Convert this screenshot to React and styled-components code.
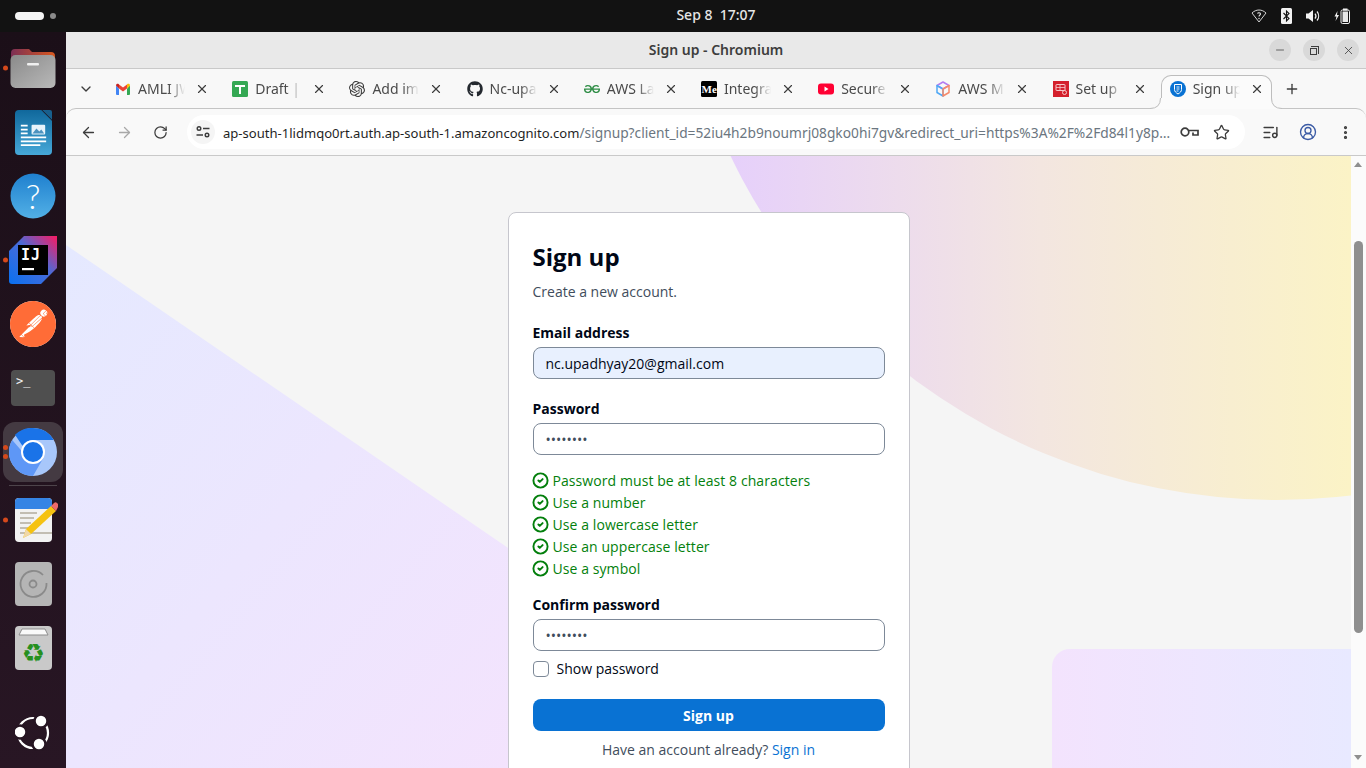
import styled, { createGlobalStyle } from "styled-components";
import {
  ArrowLeft,
  ArrowRight,
  ChevronDown,
  CircleCheck,
  CircleUserRound,
  EllipsisVertical,
  ListMusic,
  Minus,
  Plus,
  RotateCw,
  Star,
  X,
} from "lucide-react";
import { FaGithub } from "react-icons/fa";
import { SiGeeksforgeeks, SiOpenai, SiPostman } from "react-icons/si";

const GlobalStyle = createGlobalStyle`
  html, body {
    margin: 0;
    height: 100%;
    overflow: hidden;
  }
  * {
    box-sizing: border-box;
  }
`;

const chromeFont = `"Noto Sans", "Open Sans", sans-serif`;
const pageFont = `"Open Sans", "Noto Sans", sans-serif`;

/* ---------- favicons ---------- */

function GmailIcon() {
  return (
    <svg width="16" height="16" viewBox="0 0 16 16">
      <path d="M1 4.5V13a1 1 0 0 0 1 1h2V7.5z" fill="#4285f4" />
      <path d="M15 4.5V13a1 1 0 0 1-1 1h-2V7.5z" fill="#34a853" />
      <path d="M1 4.5C1 3 2.5 2.3 3.6 3.1L4 3.4v4.1z" fill="#c5221f" />
      <path d="M15 4.500c0-1.500-1.500-2.200-2.600-1.400L12 3.400v4.100z" fill="#fbbc04" />
      <path d="M4 3.400 8 6.400l4-3v4.100l-4 3-4-3z" fill="#ea4335" />
    </svg>
  );
}

function DocsGreenIcon() {
  return (
    <svg width="16" height="16" viewBox="0 0 16 16">
      <rect width="16" height="16" rx="1.500" fill="#34a853" />
      <rect x="3" y="4" width="10" height="2" fill="#fff" />
      <rect x="7" y="4" width="2" height="9" fill="#fff" />
    </svg>
  );
}

function MediumIcon() {
  return (
    <svg width="16" height="16" viewBox="0 0 16 16">
      <rect width="16" height="16" rx="1.500" fill="#000" />
      <text x="0.500" y="12" fontSize="11" fontWeight="700" fontFamily="Liberation Serif, serif" fill="#fff">
        Me
      </text>
    </svg>
  );
}

function YoutubeIcon() {
  return (
    <svg width="16" height="16" viewBox="0 0 16 16">
      <rect y="2.500" width="16" height="11" rx="3" fill="#ff0033" />
      <path d="M6.500 5.500v5L10.500 8z" fill="#fff" />
    </svg>
  );
}

function CubeIcon() {
  return (
    <svg width="16" height="16" viewBox="0 0 16 16" fill="none" strokeWidth="1.500" strokeLinejoin="round">
      <path d="M8 1 14 4.500 8 8 2 4.500z" stroke="#b47cf0" />
      <path d="M2 4.500v7L8 15V8z" stroke="#4fa8f5" />
      <path d="M14 4.500v7L8 15V8z" stroke="#f58a6b" />
    </svg>
  );
}

function RedDocIcon() {
  return (
    <svg width="16" height="16" viewBox="0 0 16 16" fill="none">
      <rect width="16" height="16" fill="#d4202c" />
      <rect x="3" y="3.500" width="9" height="6" rx="0.500" stroke="#f7c6c9" />
      <path d="M3 6.500h9M7 3.500v6" stroke="#f7c6c9" strokeWidth="0.800" />
      <circle cx="11.500" cy="11.500" r="2" stroke="#f7c6c9" />
    </svg>
  );
}

function CognitoIcon() {
  return (
    <svg width="16" height="16" viewBox="0 0 16 16" fill="none">
      <circle cx="8" cy="8" r="8" fill="#0972d3" />
      <path d="M4.500 3.500h7v5c0 2-1.500 3.300-3.500 4.500-2-1.200-3.500-2.500-3.500-4.500z" stroke="#fff" />
      <path d="M6.500 6h3M6.500 8h3M6.500 10h2" stroke="#fff" strokeWidth="0.900" />
    </svg>
  );
}

/* ---------- dock icons ---------- */

function FilesDock() {
  return (
    <svg width="46" height="42" viewBox="0 0 46 42">
      <defs>
        <linearGradient id="folderTop" x1="0" x2="1">
          <stop offset="0" stopColor="#7c2f55" />
          <stop offset="1" stopColor="#d9581f" />
        </linearGradient>
        <linearGradient id="folderBody" x1="0" y1="0" x2="1" y2="1">
          <stop offset="0" stopColor="#8a8a8a" />
          <stop offset="1" stopColor="#b9b9b9" />
        </linearGradient>
      </defs>
      <path d="M1 6a4 4 0 0 1 4-4h14l3 3h19a4 4 0 0 1 4 4v12H1z" fill="url(#folderTop)" />
      <rect x="0.500" y="8" width="45" height="33" rx="5" fill="url(#folderBody)" />
      <rect x="17" y="16" width="12" height="2.500" rx="1" fill="#f0f0f0" />
    </svg>
  );
}

function WriterDock() {
  return (
    <svg width="37" height="45" viewBox="0 0 38 46">
      <defs>
        <linearGradient id="writerBody" x1="0" y1="0" x2="0" y2="1">
          <stop offset="0" stopColor="#10689c" />
          <stop offset="1" stopColor="#46a8d8" />
        </linearGradient>
      </defs>
      <path d="M4 0h23l11 11v31a4 4 0 0 1-4 4H4a4 4 0 0 1-4-4V4a4 4 0 0 1 4-4z" fill="url(#writerBody)" />
      <path d="M28 0h8a2 2 0 0 1 2 2v8z" fill="#185f8d" />
      <path d="M6 16h7M6 20h7M6 24h7M6 28h26M6 32h26M6 36h20" stroke="#fff" strokeWidth="1.800" />
      <rect x="17" y="15" width="14" height="10" rx="1" fill="#e8f3fa" />
      <path d="M18 24l4-5 3 3 2-2 3 4z" fill="#4d93bf" />
    </svg>
  );
}

function HelpDock() {
  return (
    <svg width="46" height="46" viewBox="0 0 46 46">
      <defs>
        <linearGradient id="helpBody" x1="0" y1="0" x2="0" y2="1">
          <stop offset="0" stopColor="#1f80cf" />
          <stop offset="1" stopColor="#52b0e6" />
        </linearGradient>
      </defs>
      <circle cx="23" cy="23" r="22.500" fill="url(#helpBody)" />
      <text x="23" y="36" textAnchor="middle" fontSize="34" fontWeight="300" fill="#fff" fontFamily="Lato, Open Sans, sans-serif">
        ?
      </text>
    </svg>
  );
}

function IdeaDock() {
  return (
    <svg width="48" height="48" viewBox="0 0 48 48">
      <defs>
        <linearGradient id="ideaBody" x1="0" y1="1" x2="1" y2="0">
          <stop offset="0" stopColor="#0870f0" />
          <stop offset="0.550" stopColor="#4a6bd8" />
          <stop offset="1" stopColor="#fb1a62" />
        </linearGradient>
      </defs>
      <path d="M15 0h33v32L32 48H3a3 3 0 0 1-3-3V15z" fill="url(#ideaBody)" />
      <rect x="9" y="9" width="30" height="30" fill="#000" />
      <text x="12" y="24" fontSize="15" fontWeight="700" fill="#fff" fontFamily="DejaVu Sans Mono, monospace" textLength="19">
        IJ
      </text>
      <rect x="13" y="32" width="12" height="2.200" fill="#fff" />
    </svg>
  );
}

function PostmanDock() {
  return (
    <PostmanBadge>
      <SiPostman size={46} color="#ff6c37" />
    </PostmanBadge>
  );
}

function TerminalDock() {
  return (
    <svg width="44" height="36" viewBox="0 0 44 36">
      <rect width="44" height="36" rx="4" fill="#4f4f4f" />
      <text x="5" y="15" fontSize="12" fill="#f2f2f2" fontFamily="DejaVu Sans Mono, monospace">
        &gt;_
      </text>
    </svg>
  );
}

function ChromiumDock() {
  return (
    <svg width="48" height="48" viewBox="0 0 48 48">
      <circle cx="24" cy="24" r="24" fill="#a8c7fa" />
      <path d="M24 0a24 24 0 0 1 20.800 12H24a12 12 0 0 0-10.400 6L6 6.800A24 24 0 0 1 24 0z" fill="#1a73e8" />
      <path d="M3.200 12A24 24 0 0 0 24 48l10.400-18H24a12 12 0 0 1-10.400-6z" fill="#5e97f6" />
      <circle cx="24" cy="24" r="12" fill="#fff" />
      <circle cx="24" cy="24" r="10" fill="#1a73e8" />
    </svg>
  );
}

function NotesDock() {
  return (
    <svg width="50" height="46" viewBox="-7 0 50 46">
      <rect x="0" y="1" width="37" height="44" rx="4" fill="#f2f2f2" />
      <path d="M0 12V5a4 4 0 0 1 4-4h29a4 4 0 0 1 4 4v7z" fill="#3584e4" />
      <path d="M5 16h17M5 21h14M5 26h11M5 31h8M5 36h32" stroke="#c2bdb2" strokeWidth="2" />
      <path d="M36 9 41 14 16 37 8 41 11 32z" fill="#f5c211" />
      <path d="M36 9 39 6c1-1 2-1 3 0l1 1c1 1 1 2 0 3l-2 4z" fill="#ed6a6a" />
      <path d="M11 32 8 41l8-4z" fill="#f0d8a8" />
    </svg>
  );
}

function DiskDock() {
  return (
    <svg width="37" height="44" viewBox="0 0 37 44" fill="none">
      <rect width="37" height="44" rx="4" fill="#b5b5b5" />
      <path d="M28 13a13 13 0 1 0 3.500 8" stroke="#8a8a8a" strokeWidth="1.800" />
      <circle cx="18" cy="22" r="3.500" stroke="#8a8a8a" strokeWidth="1.800" />
    </svg>
  );
}

function TrashDock() {
  return (
    <svg width="37" height="44" viewBox="0 0 37 44" fill="none">
      <rect width="37" height="44" rx="4" fill="#c9c9c9" />
      <path d="M4 9 7 3h23l3 6z" fill="#fafafa" stroke="#8d8d8d" />
      <text x="18.500" y="36" textAnchor="middle" fontSize="26" fill="#26901f" fontFamily="DejaVu Sans, sans-serif">
        ♻
      </text>
    </svg>
  );
}

function UbuntuDock() {
  return (
    <svg width="36" height="36" viewBox="0 0 36 36" fill="none">
      <circle cx="18" cy="18" r="15" stroke="#fff" strokeWidth="2.200" />
      <circle cx="5" cy="17" r="6.500" fill="#fff" stroke="#261522" strokeWidth="2.500" />
      <circle cx="26" cy="6" r="6.500" fill="#fff" stroke="#261522" strokeWidth="2.500" />
      <circle cx="24" cy="29" r="6.500" fill="#fff" stroke="#261522" strokeWidth="2.500" />
    </svg>
  );
}

/* ---------- small toolbar and tray icons ---------- */

function SiteInfoIcon() {
  return (
    <svg width="16" height="16" viewBox="0 0 16 16" fill="none" stroke="#3c3c3c" strokeWidth="1.400">
      <circle cx="4" cy="4.500" r="1.800" />
      <path d="M8 4.500h6.500M1.500 11H8" />
      <circle cx="12" cy="11" r="1.800" />
    </svg>
  );
}

function KeyIcon() {
  return (
    <svg width="19" height="12" viewBox="0 0 19 12" fill="none" stroke="#3c3c3c" strokeWidth="1.700">
      <circle cx="5" cy="6" r="3.800" />
      <path d="M9 4.500h9v4.500h-5V6.500" />
    </svg>
  );
}

function WifiQuestionIcon() {
  return (
    <svg width="16" height="14" viewBox="0 0 16 14" fill="none" stroke="#e8e8e8">
      <path d="M1 4 8 13l7-9C13 2 10.500 1 8 1S3 2 1 4z" strokeWidth="0.900" />
      <path d="M6.500 4.500C7 3.500 9.500 3.500 9.500 5c0 1-1.500 1-1.500 2.500" strokeWidth="1.100" />
      <circle cx="8" cy="9.500" r="0.700" fill="#e8e8e8" stroke="none" />
    </svg>
  );
}

function BluetoothIcon() {
  return (
    <svg width="11" height="16" viewBox="0 0 11 16" fill="none">
      <rect width="11" height="16" rx="1.500" fill="#f2f2f2" />
      <path d="M2.500 5 8 10.500 5.500 13V3L8 5.500 2.500 11" stroke="#121212" strokeWidth="1.100" />
    </svg>
  );
}

function VolumeIcon() {
  return (
    <svg width="14" height="14" viewBox="0 0 14 14" fill="none">
      <path d="M0 4.500h2.500L7 1v12L2.500 9.500H0z" fill="#f2f2f2" />
      <path d="M9 4.500a4 4 0 0 1 0 5M11 2.500a7 7 0 0 1 0 9" stroke="#f2f2f2" strokeWidth="1.200" />
    </svg>
  );
}

function BatteryIcon() {
  return (
    <svg width="16" height="16" viewBox="0 0 16 16" fill="none">
      <path d="M3.500 3 0.500 8.500h2L1.500 13 5 7H3z" fill="#f2f2f2" />
      <rect x="7" y="2" width="8.500" height="13.500" rx="1.500" stroke="#f2f2f2" />
      <rect x="9" y="0.500" width="4.500" height="2" fill="#f2f2f2" />
      <rect x="8.500" y="3.500" width="5.500" height="10.500" fill="#e8e8e8" />
    </svg>
  );
}

function TabFlare({ side }) {
  return (
    <FlareSvg $side={side} viewBox="0 0 12 11">
      <path d="M0 10.500Q10.500 10.500 10.500 0H12V11H0z" fill="#fbfbfb" />
      <path d="M0 10.500Q10.500 10.500 10.500 0" fill="none" stroke="#bdbdbd" />
    </FlareSvg>
  );
}

/* ---------- data ---------- */

const tabs = [
  { title: "AMLI JW", Icon: GmailIcon },
  { title: "Draft ||", Icon: DocsGreenIcon },
  { title: "Add im", Icon: () => <SiOpenai size={16} color="#3c3c3c" /> },
  { title: "Nc-upa", Icon: () => <FaGithub size={16} color="#24292f" /> },
  { title: "AWS La", Icon: () => <SiGeeksforgeeks size={16} color="#2f8d46" /> },
  { title: "Integra", Icon: MediumIcon },
  { title: "Secure", Icon: YoutubeIcon },
  { title: "AWS M", Icon: CubeIcon },
  { title: "Set up", Icon: RedDocIcon },
  { title: "Sign up", Icon: CognitoIcon, active: true },
];

const dockItems = [
  { Icon: FilesDock, dots: 1 },
  { Icon: WriterDock },
  { Icon: HelpDock },
  { Icon: IdeaDock, dots: 1 },
  { Icon: PostmanDock },
  { Icon: TerminalDock },
  { Icon: ChromiumDock, dots: 2, active: true },
];

const lowerDockItems = [
  { Icon: NotesDock, dots: 1 },
  { Icon: DiskDock },
  { Icon: TrashDock },
];

const rules = [
  "Password must be at least 8 characters",
  "Use a number",
  "Use a lowercase letter",
  "Use an uppercase letter",
  "Use a symbol",
];

function DockEntry({ item }) {
  return (
    <DockSlot>
      <DockTile $active={item.active}>
        <item.Icon />
      </DockTile>
      {item.dots ? (
        <DockDots>
          {Array.from({ length: item.dots }).map((_, i) => (
            <DockDot key={i} />
          ))}
        </DockDots>
      ) : null}
    </DockSlot>
  );
}

export default function App() {
  return (
    <Desktop>
      <GlobalStyle />
      <TopBar>
        <Activities>
          <ActivityPill />
          <ActivityDot />
        </Activities>
        <Clock>Sep 8&nbsp;&nbsp;17:07</Clock>
        <Tray>
          <WifiQuestionIcon />
          <BluetoothIcon />
          <VolumeIcon />
          <BatteryIcon />
        </Tray>
      </TopBar>

      <Workspace>
        <Dock>
          {dockItems.map((item, i) => (
            <DockEntry key={i} item={item} />
          ))}
          <DockDivider />
          {lowerDockItems.map((item, i) => (
            <DockEntry key={i} item={item} />
          ))}
          <DockFooter>
            <UbuntuDock />
          </DockFooter>
        </Dock>

        <Window>
          <TitleBar>
            <WindowTitle>Sign up - Chromium</WindowTitle>
            <WindowButtons>
              <WindowButton>
                <Minus size={12} strokeWidth={1.500} />
              </WindowButton>
              <WindowButton>
                <RestoreGlyph />
              </WindowButton>
              <WindowButton>
                <X size={13} strokeWidth={1.500} />
              </WindowButton>
            </WindowButtons>
          </TitleBar>

          <TabStrip>
            <TabListButton>
              <ChevronDown size={16} strokeWidth={2} />
            </TabListButton>
            <TabRow>
              {tabs.map((tab) => (
                <Tab key={tab.title} $active={tab.active}>
                  {tab.active && <TabFlare side="left" />}
                  <Favicon>
                    <tab.Icon />
                  </Favicon>
                  <TabTitle>{tab.title}</TabTitle>
                  <TabClose>
                    <X size={14} strokeWidth={2} />
                  </TabClose>
                  {tab.active && <TabFlare side="right" />}
                </Tab>
              ))}
            </TabRow>
            <NewTab>
              <Plus size={16} strokeWidth={2} />
            </NewTab>
          </TabStrip>

          <Toolbar>
            <NavButton>
              <ArrowLeft size={17} strokeWidth={1.800} />
            </NavButton>
            <NavButton $muted>
              <ArrowRight size={17} strokeWidth={1.800} />
            </NavButton>
            <NavButton>
              <RotateCw size={15} strokeWidth={2} />
            </NavButton>
            <Omnibox>
              <SiteBadge>
                <SiteInfoIcon />
              </SiteBadge>
              <Url>
                <UrlHost>ap-south-1lidmqo0rt.auth.ap-south-1.amazoncognito.com</UrlHost>
                /signup?client_id=52iu4h2b9noumrj08gko0hi7gv&redirect_uri=https%3A%2F%2Fd84l1y8p…
              </Url>
              <OmniActions>
                <KeyIcon />
                <Star size={17} strokeWidth={1.800} color="#3c3c3c" />
              </OmniActions>
            </Omnibox>
            <ToolbarActions>
              <ListMusic size={17} strokeWidth={2} color="#3c3c3c" />
              <CircleUserRound size={18} strokeWidth={1.800} color="#3b5ba5" />
              <EllipsisVertical size={17} strokeWidth={2.500} color="#3c3c3c" />
            </ToolbarActions>
          </Toolbar>

          <Viewport>
            <Page>
              <Backdrop viewBox="0 0 1285 612" preserveAspectRatio="none">
                <defs>
                  <linearGradient id="bgTop" gradientUnits="userSpaceOnUse" x1="664" y1="0" x2="1285" y2="0">
                    <stop offset="0" stopColor="#e6d0fb" />
                    <stop offset="0.500" stopColor="#f3e6e0" />
                    <stop offset="1" stopColor="#fbf3c6" />
                  </linearGradient>
                  <linearGradient id="bgLeft" x1="0" y1="0" x2="1" y2="1">
                    <stop offset="0" stopColor="#e5e9ff" />
                    <stop offset="1" stopColor="#f3e3fd" />
                  </linearGradient>
                  <linearGradient id="bgCorner" gradientUnits="userSpaceOnUse" x1="986" y1="0" x2="1285" y2="0">
                    <stop offset="0" stopColor="#f3e3fd" />
                    <stop offset="1" stopColor="#e8e9ff" />
                  </linearGradient>
                </defs>
                <circle cx="1211" cy="-262" r="606" fill="url(#bgTop)" />
                <path d="M0 89 445 394V612H0z" fill="url(#bgLeft)" />
                <rect x="986" y="493" width="340" height="160" rx="18" fill="url(#bgCorner)" />
              </Backdrop>
              <Card>
                <CardTitle>Sign up</CardTitle>
                <CardSubtitle>Create a new account.</CardSubtitle>

                <Field>
                  <FieldLabel>Email address</FieldLabel>
                  <TextInput $autofilled type="email" value="nc.upadhyay20@gmail.com" readOnly />
                </Field>

                <Field>
                  <FieldLabel>Password</FieldLabel>
                  <TextInput type="password" value="Passw0rd" readOnly />
                </Field>

                <RuleList>
                  {rules.map((rule) => (
                    <Rule key={rule}>
                      <RuleIcon size={17} strokeWidth={2.700} />
                      {rule}
                    </Rule>
                  ))}
                </RuleList>

                <Field>
                  <FieldLabel>Confirm password</FieldLabel>
                  <TextInput type="password" value="Passw0rd" readOnly />
                </Field>

                <ShowPassword>
                  <CheckBox />
                  Show password
                </ShowPassword>

                <SubmitButton>Sign up</SubmitButton>

                <CardFooter>
                  Have an account already? <FooterLink>Sign in</FooterLink>
                </CardFooter>
              </Card>
            </Page>
            <ScrollTrack>
              <ScrollArrow />
              <ScrollThumb />
              <ScrollArrow $down />
            </ScrollTrack>
          </Viewport>
        </Window>
      </Workspace>
    </Desktop>
  );
}

const Desktop = styled.div`
  display: flex;
  flex-direction: column;
  width: 1366px;
  height: 768px;
  overflow: hidden;
  background: #121212;
`;

const TopBar = styled.header`
  display: grid;
  grid-template-columns: 1fr auto 1fr;
  align-items: center;
  height: 32px;
  flex: none;
  background: #121212;
  padding: 0 16px 0 15px;
`;

const Activities = styled.div`
  display: flex;
  align-items: center;
  gap: 6px;
`;

const ActivityPill = styled.div`
  width: 29px;
  height: 8px;
  border-radius: 4px;
  background: #f4f4f4;
`;

const ActivityDot = styled.div`
  width: 6px;
  height: 6px;
  border-radius: 50%;
  background: #8a8a8a;
`;

const Clock = styled.div`
  font: 500 14px ${chromeFont};
  color: #e6e6e6;
  margin: -3px 0 0 67px;
`;

const Tray = styled.div`
  display: flex;
  align-items: center;
  justify-content: flex-end;
  gap: 14px;
`;

const Workspace = styled.div`
  display: flex;
  flex: 1;
  min-height: 0;
`;

const Dock = styled.nav`
  display: flex;
  flex-direction: column;
  width: 66px;
  flex: none;
  padding-top: 4px;
  background: linear-gradient(180deg, #1b0f18 0%, #281624 100%);
`;

const DockSlot = styled.div`
  position: relative;
  display: flex;
  align-items: center;
  justify-content: center;
  height: 64px;
  flex: none;
`;

const DockTile = styled.div`
  display: flex;
  align-items: center;
  justify-content: center;
  width: 60px;
  height: 60px;
  border-radius: 12px;
  background: ${(p) => (p.$active ? "#443a42" : "transparent")};
`;

const PostmanBadge = styled.span`
  display: flex;
  width: 46px;
  height: 46px;
  border-radius: 50%;
  background: #ffffff;
`;

const DockDots = styled.div`
  position: absolute;
  left: 3px;
  top: 50%;
  transform: translateY(-50%);
  display: flex;
  flex-direction: column;
  gap: 4px;
`;

const DockDot = styled.span`
  display: block;
  width: 5px;
  height: 5px;
  border-radius: 50%;
  background: #d5491c;
`;

const DockDivider = styled.div`
  height: 1px;
  margin: 1px 9px 2px;
  background: #4d444b;
  flex: none;
`;

const DockFooter = styled.div`
  display: flex;
  justify-content: center;
  margin-top: auto;
  padding-bottom: 17px;
`;

const Window = styled.main`
  display: flex;
  flex-direction: column;
  flex: 1;
  min-width: 0;
  background: #f8f8f8;
`;

const TitleBar = styled.div`
  position: relative;
  display: flex;
  align-items: center;
  justify-content: center;
  height: 37px;
  flex: none;
  background: #e9e9e9;
  border-bottom: 1px solid #c9c9c9;
`;

const WindowTitle = styled.div`
  font: 600 14px ${chromeFont};
  color: #3d3d3d;
  margin-top: -2px;
`;

const WindowButtons = styled.div`
  position: absolute;
  right: 7px;
  top: 7px;
  display: flex;
  gap: 12px;
`;

const WindowButton = styled.div`
  display: flex;
  align-items: center;
  justify-content: center;
  width: 22px;
  height: 22px;
  border-radius: 50%;
  background: #d9d9d9;
  color: #3d3d3d;
`;

const RestoreGlyph = styled.span`
  position: relative;
  display: block;
  width: 7px;
  height: 7px;
  margin: 2px 2px 0 0;
  border: 1px solid #3d3d3d;

  &::after {
    content: "";
    position: absolute;
    top: -3px;
    right: -3px;
    width: 7px;
    height: 7px;
    border-top: 1px solid #3d3d3d;
    border-right: 1px solid #3d3d3d;
  }
`;

const TabStrip = styled.div`
  position: relative;
  z-index: 1;
  display: flex;
  align-items: stretch;
  height: 39px;
  flex: none;
`;

const TabListButton = styled.div`
  display: flex;
  align-items: center;
  justify-content: center;
  width: 40px;
  flex: none;
  color: #3c3c3c;
`;

const TabRow = styled.div`
  display: flex;
  align-items: stretch;
  gap: 6.200px;
  flex: none;
`;

const Tab = styled.div`
  position: relative;
  display: flex;
  align-items: center;
  width: 111px;
  padding: 0 6px 7px 8px;
  margin: 6px 0 -1px;
  border-radius: 10px 10px 0 0;
  border: 1px solid ${(p) => (p.$active ? "#bdbdbd" : "transparent")};
  border-bottom: none;
  background: ${(p) => (p.$active ? "#fbfbfb" : "transparent")};
`;

const FlareSvg = styled.svg`
  position: absolute;
  bottom: 0;
  width: 12px;
  height: 11px;
  ${(p) => (p.$side === "left" ? "left: -11.500px;" : "right: -11.500px; transform: scaleX(-1);")}
`;

const Favicon = styled.span`
  display: flex;
  flex: none;
  width: 16px;
  height: 16px;
  margin-right: 7px;
`;

const TabTitle = styled.span`
  flex: 1;
  min-width: 0;
  margin-top: -2px;
  overflow: hidden;
  white-space: nowrap;
  font: 400 14px ${chromeFont};
  color: #4a4a4a;
  -webkit-mask-image: linear-gradient(90deg, #000 65%, transparent 100%);
  mask-image: linear-gradient(90deg, #000 65%, transparent 100%);
`;

const TabClose = styled.span`
  display: flex;
  flex: none;
  align-items: center;
  justify-content: center;
  width: 16px;
  height: 16px;
  margin-left: 9px;
  color: #3c3c3c;
`;

const NewTab = styled.div`
  display: flex;
  align-items: center;
  flex: 1;
  padding-left: 12px;
  color: #3c3c3c;
`;

const Toolbar = styled.div`
  display: flex;
  align-items: center;
  height: 48px;
  flex: none;
  padding: 0 0 0 4px;
  background: #f9f9f9;
  border-top: 1px solid #c4c4c4;
  border-bottom: 1px solid #c9c9c9;
  border-radius: 10px 10px 0 0;
`;

const NavButton = styled.div`
  display: flex;
  align-items: center;
  justify-content: center;
  width: 36px;
  height: 36px;
  color: ${(p) => (p.$muted ? "#a8a8a8" : "#3c3c3c")};
`;

const Omnibox = styled.div`
  display: flex;
  align-items: center;
  width: 1058px;
  height: 34px;
  margin-left: 9px;
  padding: 0 15px 0 4px;
  border-radius: 17px;
  background: #ffffff;
`;

const SiteBadge = styled.div`
  display: flex;
  align-items: center;
  justify-content: center;
  width: 24px;
  height: 24px;
  flex: none;
  border-radius: 50%;
  background: #f5f5f5;
`;

const Url = styled.div`
  flex: 1;
  min-width: 0;
  margin-left: 8px;
  font: 400 13.750px ${chromeFont};
  color: #6b7680;
  white-space: nowrap;
  overflow: hidden;
`;

const UrlHost = styled.span`
  font-size: 13.060px;
  color: #1f1f1f;
`;

const OmniActions = styled.div`
  display: flex;
  align-items: center;
  gap: 14px;
  margin-left: 8px;
`;

const ToolbarActions = styled.div`
  display: flex;
  align-items: center;
  gap: 20px;
  margin-left: 17px;
`;

const Viewport = styled.div`
  display: flex;
  flex: 1;
  min-height: 0;
`;

const Page = styled.div`
  position: relative;
  flex: 1;
  min-width: 0;
  overflow: hidden;
  padding-top: 56px;
  background: #f5f5f5;
`;

const Backdrop = styled.svg`
  position: absolute;
  inset: 0;
  width: 100%;
  height: 100%;
`;

const Card = styled.section`
  position: relative;
  width: 402px;
  margin: 0 auto;
  padding: 24px 24px 60px;
  background: #ffffff;
  border: 1px solid #c6c6cd;
  border-radius: 8px;
  font-family: ${pageFont};
`;

const CardTitle = styled.h1`
  margin: 2px 0 0;
  font-size: 24px;
  line-height: 36px;
  font-weight: 700;
  color: #000716;
`;

const CardSubtitle = styled.p`
  margin: 7px 0 0;
  padding-bottom: 1px;
  font-size: 14px;
  line-height: 20px;
  color: #414d5c;
`;

const Field = styled.div`
  display: flex;
  flex-direction: column;
  margin-top: 20px;
`;

const FieldLabel = styled.label`
  font-size: 14px;
  font-weight: 700;
  line-height: 20px;
  color: #000716;
  margin-bottom: 4px;
`;

const TextInput = styled.input`
  height: 32px;
  padding: 0 12px;
  border: 1px solid #7d8998;
  border-radius: 8px;
  outline: none;
  font-family: ${pageFont};
  font-size: 14px;
  color: #000716;
  background: ${(p) => (p.$autofilled ? "#e8f0fe" : "#ffffff")};

  &[type="password"] {
    color: #414d5c;
  }
`;

const RuleList = styled.ul`
  list-style: none;
  margin: 14px 0 -4px;
  padding: 0;
`;

const Rule = styled.li`
  display: flex;
  align-items: center;
  gap: 4px;
  height: 22px;
  font-size: 14px;
  letter-spacing: 0.080px;
  color: #037f0c;
`;

const RuleIcon = styled(CircleCheck)`
  flex: none;
  margin: 0 -0.500px;
`;

const ShowPassword = styled.div`
  display: flex;
  align-items: center;
  gap: 8px;
  margin-top: 10px;
  font-size: 14px;
  line-height: 16px;
  color: #000716;
`;

const CheckBox = styled.span`
  display: block;
  width: 16px;
  height: 16px;
  flex: none;
  border: 1px solid #7d8998;
  border-radius: 4px;
  background: #ffffff;
`;

const SubmitButton = styled.button`
  display: block;
  width: 100%;
  height: 32px;
  margin-top: 22px;
  border: none;
  border-radius: 8px;
  background: #0972d3;
  color: #ffffff;
  font-family: ${pageFont};
  font-size: 14px;
  font-weight: 700;
`;

const CardFooter = styled.p`
  margin: 9px 0 0;
  text-align: center;
  font-size: 14px;
  line-height: 20px;
  color: #414d5c;
`;

const FooterLink = styled.a`
  color: #0972d3;
`;

const ScrollTrack = styled.div`
  position: relative;
  width: 15px;
  flex: none;
  background: #fbfbfb;
`;

const ScrollArrow = styled.div`
  position: absolute;
  left: 3px;
  width: 0;
  height: 0;
  border-left: 4.500px solid transparent;
  border-right: 4.500px solid transparent;
  ${(p) =>
    p.$down
      ? "bottom: 8px; border-top: 5px solid #8f8f8f;"
      : "top: 6px; border-bottom: 5px solid #8f8f8f;"}
`;

const ScrollThumb = styled.div`
  position: absolute;
  top: 85px;
  left: 3px;
  width: 9px;
  height: 392px;
  border-radius: 5px;
  background: #8f8f8f;
`;
